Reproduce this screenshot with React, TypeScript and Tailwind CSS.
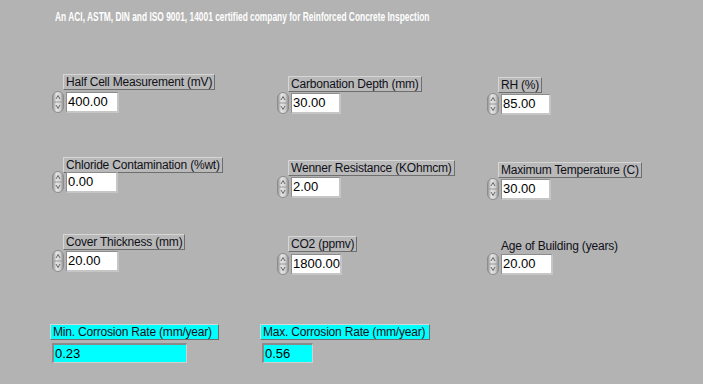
import React from 'react';

const Spinner = () => (
  <svg width="12" height="22" viewBox="0 0 12 22" className="shrink-0">
    <defs>
      <linearGradient id="spin" x1="0" y1="0" x2="1" y2="0">
        <stop offset="0" stopColor="#8e8e8e" />
        <stop offset="0.35" stopColor="#e4e4e4" />
        <stop offset="0.7" stopColor="#d2d2d2" />
        <stop offset="1" stopColor="#8a8a8a" />
      </linearGradient>
    </defs>
    <rect x="0.5" y="0.5" width="11" height="21" rx="5.5" fill="url(#spin)" stroke="#8c8c8c" />
    <line x1="2" y1="11" x2="10" y2="11" stroke="#9a9a9a" />
    <path d="M4 8 L6 4.5 L8 8" fill="none" stroke="#5a5a5a" strokeWidth="0.9" />
    <path d="M4 14 L6 17.5 L8 14" fill="none" stroke="#5a5a5a" strokeWidth="0.9" />
  </svg>
);

type CtlProps = {
  label: string;
  value: string;
  pt: string;
  gap: string;
  w: string;
  boxed?: boolean;
};

const Control = ({ label, value, pt, gap, w, boxed = true }: CtlProps) => (
  <div className={`flex flex-col items-start ${pt}`}>
    <div
      className={
        boxed
          ? 'ml-[11px] h-[16px] px-[2px] flex items-center bg-[#b9b9b9] border border-t-[#d6d6d6] border-l-[#d6d6d6] border-r-[#6e6e6e] border-b-[#6e6e6e] text-[12px] tracking-[-0.2px] leading-none text-[#101018] whitespace-nowrap'
          : 'ml-[11px] h-[16px] px-[3px] flex items-center text-[12px] tracking-[-0.2px] leading-none text-[#101018] whitespace-nowrap'
      }
    >
      {label}
    </div>
    <div className={`flex items-center ${gap}`}>
      <Spinner />
      <div className="ml-[2px] border-t border-l border-t-[#8c8c8c] border-l-[#8c8c8c] border-r-2 border-b-2 border-r-[#c6c6c6] border-b-[#c6c6c6]">
        <div className={`${w} h-[18px] bg-white pl-[1px] flex items-center text-[13px] leading-none text-black`}>
          {value}
        </div>
      </div>
    </div>
  </div>
);

const Indicator = ({ label, value, w, lw }: { label: string; value: string; w: string; lw: string }) => (
  <div className="flex flex-col items-start">
    <div className={`${lw} h-[16px] px-[2px] flex items-center bg-[#00ffff] border border-t-[#d6d6d6] border-l-[#d6d6d6] border-r-[#6e6e6e] border-b-[#6e6e6e] text-[12px] tracking-[-0.2px] leading-none text-[#101018] whitespace-nowrap`}>
      {label}
    </div>
    <div className="mt-[3px] ml-[2px] border-t-2 border-l-2 border-t-[#8a8a8a] border-l-[#8a8a8a] border-r border-b border-r-[#d0d0d0] border-b-[#d0d0d0]">
      <div className={`${w} h-[17px] bg-[#00ffff] pl-[1px] flex items-center text-[13px] leading-none text-black`}>
        {value}
      </div>
    </div>
  </div>
);

export default function App() {
  return (
    <div className="w-[703px] h-[384px] overflow-hidden bg-[#b3b3b3] font-['Liberation_Sans',Arial,sans-serif]">
      <div className="h-[74px] pt-[10px] pl-[55px]">
        <div className="origin-left scale-x-[0.645] whitespace-nowrap text-[13px] font-bold leading-none text-white">
          An ACI, ASTM, DIN and ISO 9001, 14001 certified company for Reinforced Concrete Inspection
        </div>
      </div>

      <div className="h-[83px] pl-[52px] flex items-start">
        <div className="w-[225px]">
          <Control label="Half Cell Measurement (mV)" value="400.00" pt="pt-0" gap="mt-[1px]" w="w-[50px]" />
        </div>
        <div className="w-[210px]">
          <Control label="Carbonation Depth (mm)" value="30.00" pt="pt-[2px]" gap="mt-0" w="w-[47px]" />
        </div>
        <div>
          <Control label="RH (%)" value="85.00" pt="pt-[3px]" gap="mt-0" w="w-[47px]" />
        </div>
      </div>

      <div className="h-[77px] pl-[52px] flex items-start">
        <div className="w-[225px]">
          <Control label="Chloride Contamination (%wt)" value="0.00" pt="pt-0" gap="-mt-[2px]" w="w-[49px]" />
        </div>
        <div className="w-[210px]">
          <Control label="Wenner Resistance (KOhmcm)" value="2.00" pt="pt-[3px]" gap="mt-0" w="w-[47px]" />
        </div>
        <div>
          <Control label="Maximum Temperature (C)" value="30.00" pt="pt-[5px]" gap="mt-0" w="w-[47px]" />
        </div>
      </div>

      <div className="h-[90px] pl-[52px] flex items-start">
        <div className="w-[225px]">
          <Control label="Cover Thickness (mm)" value="20.00" pt="pt-0" gap="mt-0" w="w-[50px]" />
        </div>
        <div className="w-[210px]">
          <Control label="CO2 (ppmv)" value="1800.00" pt="pt-[2px]" gap="mt-[1px]" w="w-[48px]" />
        </div>
        <div>
          <Control label="Age of Building (years)" value="20.00" pt="pt-[4px]" gap="-mt-[1px]" w="w-[49px]" boxed={false} />
        </div>
      </div>

      <div className="pl-[50px] flex items-start">
        <div className="w-[210px]">
          <Indicator label="Min. Corrosion Rate (mm/year)" value="0.23" lw="w-[169px]" w="w-[132px]" />
        </div>
        <div>
          <Indicator label="Max. Corrosion Rate (mm/year)" value="0.56" lw="w-[170px]" w="w-[48px]" />
        </div>
      </div>
    </div>
  );
}
